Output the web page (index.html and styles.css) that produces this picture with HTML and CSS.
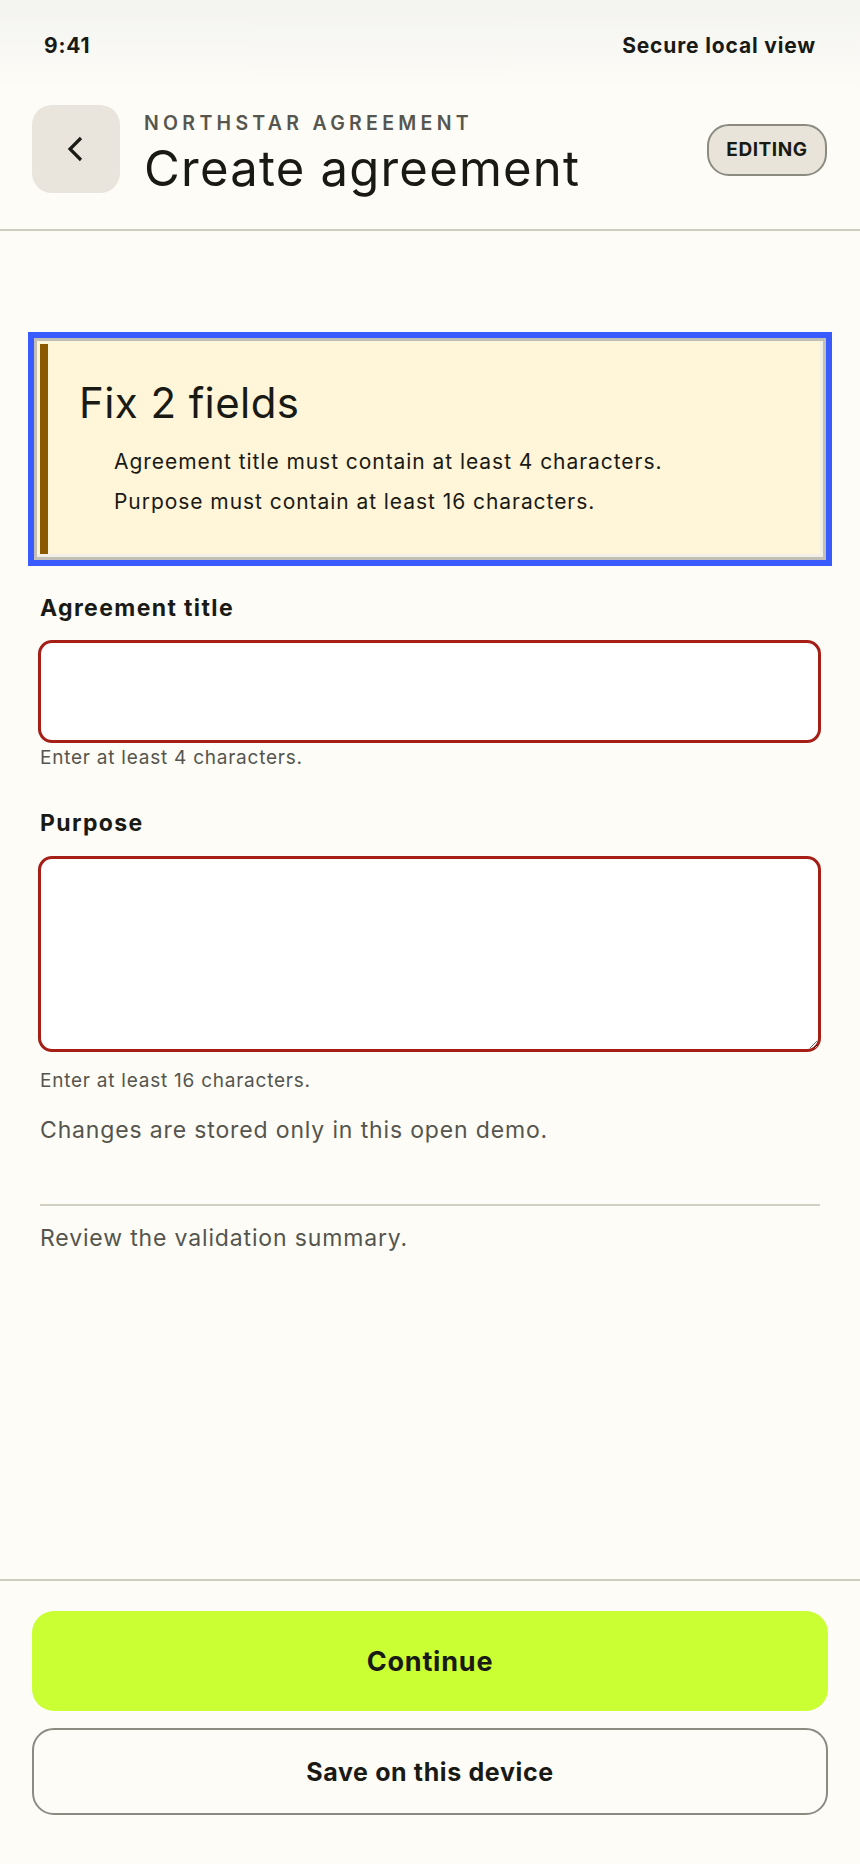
FILE: index.html
```html
<!DOCTYPE html>
<html lang="en">
<head>
  <meta charset="UTF-8" />
  <meta name="viewport" content="width=device-width, initial-scale=1" />
  <title>Create agreement</title>
  <link rel="stylesheet" href="styles.css">
</head>
<body>
<div class="app">

  <div class="status">
    <span>9:41</span>
    <span>Secure local view</span>
  </div>

  <header class="topbar">
    <button class="back" aria-label="Back">
      <svg width="20" height="28" viewBox="0 0 20 28">
        <path d="M15 3 L4 14 L15 25" fill="none" stroke="#1b1b16" stroke-width="3.2" />
      </svg>
    </button>
    <div class="heading">
      <p class="eyebrow">NORTHSTAR AGREEMENT</p>
      <h1>Create agreement</h1>
    </div>
    <span class="badge">EDITING</span>
  </header>

  <main class="form">
    <div class="summary" tabindex="-1" role="alert">
      <div class="summary-body">
        <h2>Fix 2 fields</h2>
        <ul>
          <li>Agreement title must contain at least 4 characters.</li>
          <li>Purpose must contain at least 16 characters.</li>
        </ul>
      </div>
    </div>

    <label class="label" for="title">Agreement title</label>
    <input id="title" class="field invalid" type="text" aria-invalid="true" />
    <p class="hint">Enter at least 4 characters.</p>

    <label class="label label-gap" for="purpose">Purpose</label>
    <textarea id="purpose" class="field area invalid" aria-invalid="true"></textarea>
    <p class="hint hint-gap">Enter at least 16 characters.</p>

    <p class="note">Changes are stored only in this open demo.</p>
    <hr class="rule" />
    <p class="note note-tight">Review the validation summary.</p>
  </main>

  <footer class="actions">
    <button class="btn primary">Continue</button>
    <button class="btn secondary">Save on this device</button>
  </footer>

</div>
</body>
</html>
```

FILE: styles.css
```css
* { box-sizing: border-box; }
body { margin: 0; background: #fdfcf7; color: #1a1a15; font-family: Inter, "Liberation Sans", sans-serif; }
.app { min-height: 100vh; display: flex; flex-direction: column; }

/* status bar */
.status {
  height: 90px; padding: 35px 44px 0;
  display: flex; justify-content: space-between;
  font-size: 21px; font-weight: 700; line-height: 22px; letter-spacing: 0.04em;
  background: linear-gradient(#f3f3f0, #fdfcf7);
}

/* header */
.topbar {
  display: flex; align-items: center; gap: 24px;
  padding: 15px 33px 36px 32px;
  border-bottom: 2px solid #cfcdbf;
}
.back {
  width: 88px; height: 88px; flex: none; padding: 0;
  display: grid; place-items: center;
  border: none; border-radius: 20px; background: #e9e5dc; cursor: pointer;
}
.heading { flex: 1; align-self: flex-start; padding-top: 7px; }
.eyebrow {
  margin: 0 0 11px; font-size: 19.5px; font-weight: 600; line-height: 22px;
  letter-spacing: 0.22em; color: #56564f;
}
h1 { margin: 0; font-size: 49px; font-weight: 400; line-height: 48px; letter-spacing: 0.025em; }
.badge {
  width: 120px; height: 52px; flex: none; margin-top: 2px;
  border: 2px solid #8c8b82; border-radius: 22px; background: #e8e4da;
  font-size: 19px; font-weight: 700; line-height: 48px; text-align: center; letter-spacing: 0.03em;
}

/* form */
.form { padding: 0 40px; }
.summary {
  margin: 107px -6px 0;
  padding: 3px;
  border: 3px solid #c2bfb6;
  outline: 6px solid #3a5cff;
  background: #fff5d8;
  box-shadow: inset -3px -3px 0 #f2efe6;
}
.summary-body { border-left: 8px solid #8b5a00; padding: 35px 20px 32px 31px; }
.summary h2 { margin: 0 0 15px; font-size: 42px; font-weight: 400; line-height: 48px; letter-spacing: 0.01em; }
.summary ul { margin: 0; padding-left: 35px; list-style: none; }
.summary li { font-size: 21px; line-height: 40px; letter-spacing: 0.045em; }

.label { display: block; margin-top: 34px; font-size: 23px; font-weight: 700; line-height: 28px; letter-spacing: 0.06em; }
.label-gap { margin-top: 40px; }
.field {
  display: block; width: calc(100% + 3px); margin: 18px 0 0 -2px;
  height: 103px; padding: 12px 16px;
  border: 3px solid #ccc; border-radius: 14px; background: #fff;
  font: inherit; font-size: 20px;
}
.field.invalid { border-color: #a51f17; }
.area { height: 196px; margin-top: 19px; }

.hint { margin: 4px 0 0; font-size: 19px; line-height: 22px; letter-spacing: 0.04em; color: #55554e; }
.hint-gap { margin-top: 18px; }
.note { margin: 23px 0 0; font-size: 23px; line-height: 30px; letter-spacing: 0.037em; color: #55554e; }
.note-tight { margin-top: 17px; }
.rule { margin: 59px 0 0; border: none; border-top: 2px solid #d2cfc3; }

/* footer actions */
.actions {
  margin-top: auto;
  display: flex; flex-direction: column; gap: 17px;
  padding: 30px 32px 49px;
  border-top: 2px solid #cfcdbf;
}
.btn { width: 100%; border-radius: 22px; font-family: inherit; font-weight: 700; color: #1a1a15; cursor: pointer; }
.primary { height: 100px; border: none; background: #c9ff33; font-size: 27px; letter-spacing: 0.03em; }
.secondary { height: 87px; border: 2px solid #8c8b82; background: transparent; font-size: 25px; letter-spacing: 0.025em; }
```
